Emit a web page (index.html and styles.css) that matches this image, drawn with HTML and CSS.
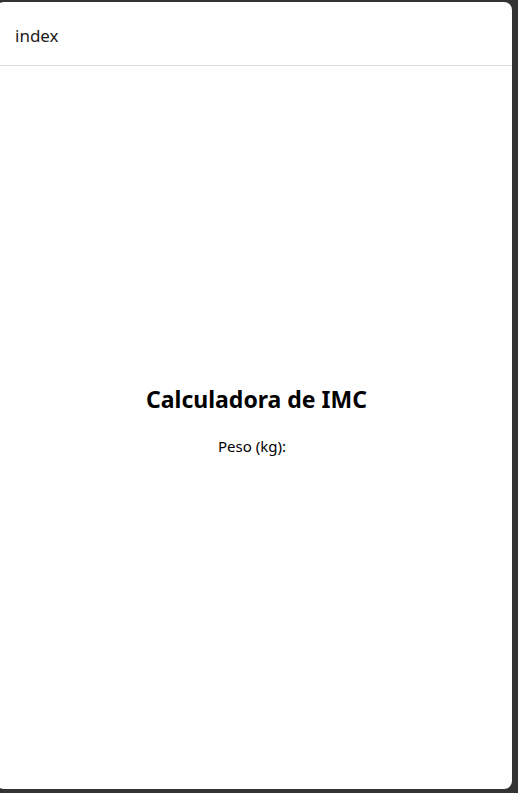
FILE: index.html
```html
<!DOCTYPE html>
<html lang="pt">
<head>
<meta charset="utf-8">
<title>index</title>
<link rel="stylesheet" href="styles.css">
</head>
<body>
<div class="window">
  <header class="titlebar">index</header>
  <main class="content">
    <h2 class="title">Calculadora de IMC</h2>
    <label class="field-label">Peso (kg):</label>
  </main>
</div>
</body>
</html>
```
FILE: styles.css
```css
html, body {
  margin: 0;
  padding: 0;
  height: 100%;
}
body {
  background: #333333;
  font-family: "Noto Sans", "Open Sans", sans-serif;
  color: #000;
  overflow: hidden;
}
.window {
  margin: 2px 6px 0 -4px;
  height: 787px;
  background: #ffffff;
  border-radius: 8px;
  display: flex;
  flex-direction: column;
  overflow: hidden;
}
.titlebar {
  height: 64px;
  box-sizing: border-box;
  border-bottom: 1px solid #dcdcdc;
  padding-left: 19px;
  padding-top: 4px;
  display: flex;
  align-items: center;
  font-size: 17px;
  color: #1a1a1a;
}
.content {
  flex: 1;
  display: flex;
  flex-direction: column;
  align-items: center;
  justify-content: center;
  padding-bottom: 16px;
  padding-left: 5px;
}
.title {
  margin: 0;
  font-size: 23px;
  font-weight: 700;
  line-height: 32px;
}
.field-label {
  margin-top: 21px;
  margin-right: 9px;
  font-size: 15px;
  line-height: 20px;
}
```
